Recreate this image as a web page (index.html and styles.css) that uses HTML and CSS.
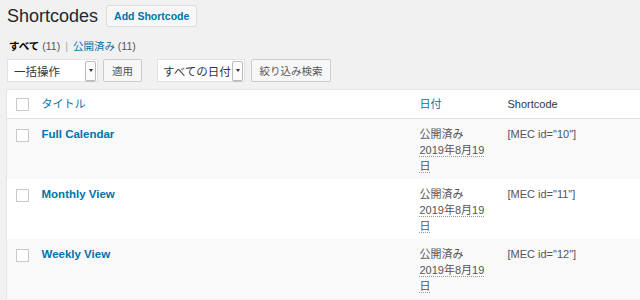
FILE: index.html
```html
<!DOCTYPE html>
<html lang="ja">
<head>
<meta charset="utf-8">
<title>Shortcodes</title>
<link rel="stylesheet" href="styles.css">
</head>
<body>
<div class="wrap">
  <div class="page-head">
    <h1 class="page-title">Shortcodes</h1>
    <a class="add-btn" href="#">Add Shortcode</a>
  </div>
  <ul class="subsubsub">
    <li class="current">すべて <span class="count">(11)</span></li>
    <li class="sep">|</li>
    <li><a href="#">公開済み <span class="count">(11)</span></a></li>
  </ul>
  <div class="tablenav">
    <div class="select select-bulk"><span class="select-label">一括操作</span><span class="select-arrow"></span></div>
    <button class="btn btn-apply">適用</button>
    <div class="select select-date"><span class="select-label">すべての日付</span><span class="select-arrow"></span></div>
    <button class="btn btn-filter">絞り込み検索</button>
  </div>
  <table class="list">
    <thead>
      <tr>
        <th class="col-cb"><span class="cb"></span></th>
        <th class="col-title"><a href="#">タイトル</a></th>
        <th class="col-date"><a href="#">日付</a></th>
        <th class="col-code">Shortcode</th>
      </tr>
    </thead>
    <tbody>
      <tr class="alt">
        <td class="col-cb"><span class="cb"></span></td>
        <td class="col-title"><a class="row-title" href="#">Full Calendar</a></td>
        <td class="col-date">公開済み<br><abbr title="2019/08/19">2019年8月19日</abbr></td>
        <td class="col-code">[MEC id="10"]</td>
      </tr>
      <tr>
        <td class="col-cb"><span class="cb"></span></td>
        <td class="col-title"><a class="row-title" href="#">Monthly View</a></td>
        <td class="col-date">公開済み<br><abbr title="2019/08/19">2019年8月19日</abbr></td>
        <td class="col-code">[MEC id="11"]</td>
      </tr>
      <tr class="alt">
        <td class="col-cb"><span class="cb"></span></td>
        <td class="col-title"><a class="row-title" href="#">Weekly View</a></td>
        <td class="col-date">公開済み<br><abbr title="2019/08/19">2019年8月19日</abbr></td>
        <td class="col-code">[MEC id="12"]</td>
      </tr>
    </tbody>
  </table>
</div>
</body>
</html>
```
FILE: styles.css
```css
html, body {
  margin: 0;
  padding: 0;
  overflow: hidden;
}
body {
  background: #f1f1f1;
  color: #444;
  font-family: "Liberation Sans", "Noto Sans CJK JP", sans-serif;
  font-size: 11px;
}
a {
  color: #0073aa;
  text-decoration: none;
}
.wrap {
  padding-left: 6px;
}
.page-head {
  display: flex;
  align-items: center;
  gap: 8px;
  margin-top: 5px;
  height: 22px;
}
.page-title {
  margin: 0 0 0 1px;
  font-size: 18px;
  font-weight: 400;
  color: #23282d;
  line-height: 22px;
}
.add-btn {
  display: flex;
  align-items: center;
  height: 20px;
  padding: 0 7px;
  border: 1px solid #ddd;
  background: #f7f7f7;
  border-radius: 2px;
  font-weight: 700;
  font-size: 10.5px;
}
.subsubsub {
  list-style: none;
  margin: 11px 0 0 3px;
  padding: 0;
  display: flex;
  gap: 5px;
  line-height: 16px;
  font-size: 10.5px;
}
.subsubsub .current {
  color: #000;
  font-weight: 700;
}
.count {
  color: #555;
  font-weight: 400;
}
.sep {
  color: #aaa;
}
.tablenav {
  display: flex;
  align-items: center;
  margin: 5px 0 0 1px;
  height: 23px;
}
.select {
  box-sizing: border-box;
  height: 23px;
  background: #fff;
  border: 1px solid #e2e2e2;
  display: flex;
  align-items: center;
  justify-content: space-between;
  padding: 0 1px 0 6px;
  color: #32373c;
  font-size: 11.5px;
}
.select-bulk {
  width: 91px;
}
.select-date {
  width: 88px;
  margin-left: 15px;
  padding-left: 5px;
}
.select-arrow {
  box-sizing: border-box;
  width: 11px;
  height: 20px;
  border: 1px solid #bbb;
  border-radius: 2px;
  background: #fcfcfc;
  box-shadow: 0 1px 1px rgba(0,0,0,0.15);
  display: flex;
  align-items: center;
  justify-content: center;
}
.select-arrow::after {
  content: "";
  width: 0;
  height: 0;
  border-left: 2.5px solid transparent;
  border-right: 2.5px solid transparent;
  border-top: 3px solid #333;
}
.btn {
  box-sizing: border-box;
  height: 23px;
  background: #f7f7f7;
  border: 1px solid #ccc;
  border-radius: 2px;
  color: #555;
  font-family: inherit;
  font-size: 10.5px;
  padding: 0;
  margin-left: 5px;
}
.btn-apply {
  width: 39px;
}
.btn-filter {
  width: 80px;
  margin-left: 6px;
}
.list {
  margin-top: 7px;
  width: 660px;
  border-collapse: collapse;
  table-layout: fixed;
  background: #fff;
  border-left: 1px solid #e5e5e5;
  border-top: 1px solid #e5e5e5;
}
.list th,
.list td {
  text-align: left;
  vertical-align: top;
  font-weight: 400;
  line-height: 16px;
  padding: 7px 10px 5px 10px;
}
.list thead th {
  padding: 6px 10px 6px 10px;
  border-bottom: 1px solid #e1e1e1;
  color: #32373c;
}
.list tr.alt td {
  background: #f9f9f9;
}
.list .col-cb {
  width: 35px;
  padding-left: 9px;
  padding-right: 0;
  box-sizing: border-box;
}
.list .col-title {
  width: 368px;
  padding-left: 0;
  box-sizing: border-box;
}
.list .col-date {
  width: 88px;
  padding-right: 12px;
  box-sizing: border-box;
  color: #555;
}
.list .col-code {
  color: #555;
}
.list thead .col-code {
  color: #32373c;
}
.cb {
  display: block;
  width: 13px;
  height: 13px;
  box-sizing: border-box;
  border: 1px solid #c7c9cc;
  background: #fff;
  margin-top: 2px;
}
.list tbody .cb {
  margin-top: 3px;
}
.row-title {
  font-weight: 700;
  font-size: 11.5px;
}
abbr {
  text-decoration: underline dotted #999;
  text-underline-offset: 2px;
}
```
